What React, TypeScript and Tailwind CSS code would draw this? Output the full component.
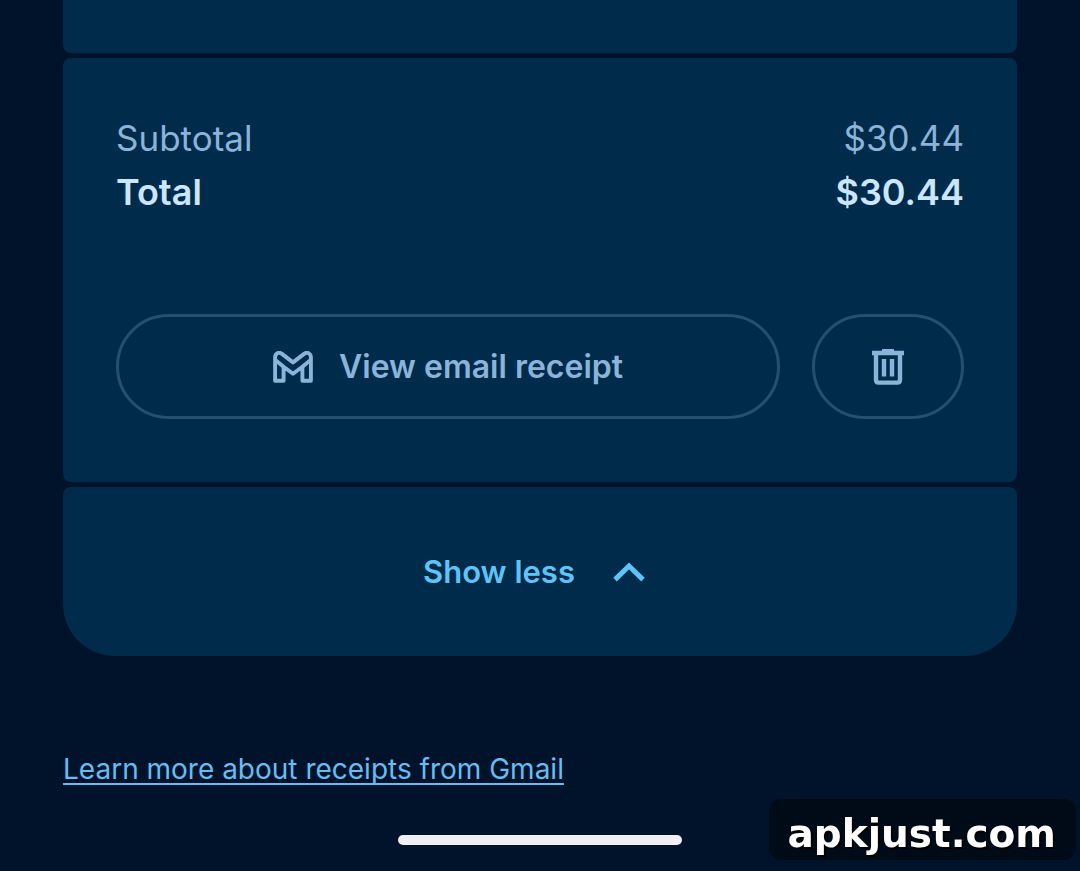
import type { ReactNode } from "react";

type AmountRow = {
  label: string;
  amount: string;
  strong?: boolean;
};

const AMOUNTS: AmountRow[] = [
  { label: "Subtotal", amount: "$30.44" },
  { label: "Total", amount: "$30.44", strong: true },
];

function GmailIcon() {
  return (
    <svg
      width="40"
      height="32"
      viewBox="0 0 40 32"
      fill="none"
      stroke="currentColor"
      strokeWidth="3.9"
      strokeLinejoin="round"
      aria-hidden="true"
    >
      <path d="M2.1 29.8V6.4C2.1 2.6 5.6 0.6 8.6 2.6L20 11.4L31.4 2.6C34.4 0.6 37.9 2.6 37.9 6.4V29.8H29.4V15.8L20 22.8L10.6 15.8V29.8Z" />
      <path d="M2.6 9.2L10.6 15.8M37.4 9.2L29.4 15.8" />
    </svg>
  );
}

function TrashIcon() {
  return (
    <svg
      width="32"
      height="36"
      viewBox="0 0 32 36"
      fill="none"
      stroke="currentColor"
      strokeWidth="4.4"
      aria-hidden="true"
    >
      <path d="M0 4H32M10 2H22" />
      <path d="M4 4V31Q4 33.6 6.6 33.6H25.4Q28 33.6 28 31V4" />
      <path d="M12 10V27.5M20 10V27.5" />
    </svg>
  );
}

function ChevronUpIcon() {
  return (
    <svg
      width="32"
      height="20"
      viewBox="0 0 32 20"
      fill="none"
      stroke="currentColor"
      strokeWidth="5"
      aria-hidden="true"
    >
      <path d="M2 17.6L16 4L30 17.6" />
    </svg>
  );
}

type OutlineButtonProps = {
  className: string;
  label?: string;
  children: ReactNode;
};

function OutlineButton({ className, label, children }: OutlineButtonProps) {
  return (
    <button
      type="button"
      aria-label={label}
      className={`flex h-[105px] items-center justify-center gap-[26px] rounded-full border-3 border-[#25506f] text-[32px] leading-10 font-semibold text-[#8ab4d8] ${className}`}
    >
      {children}
    </button>
  );
}

export default function App() {
  return (
    <div className="min-h-screen bg-[#00132b] font-['Inter',sans-serif]">
      <main className="px-[63px]">
        <div className="flex flex-col gap-[5px]">
          <div className="h-[53px] rounded-b-lg bg-[#002b4b]" />

          <section className="rounded-lg bg-[#002b4b] px-[53px] pt-[53px] pb-[63px]">
            <dl>
              {AMOUNTS.map((row) => (
                <div
                  key={row.label}
                  className={`flex h-[54px] items-center justify-between leading-10 ${
                    row.strong
                      ? "text-[36px] font-semibold text-[#cbe6ff]"
                      : "text-[35px] text-[#8ab4d8]"
                  }`}
                >
                  <dt>{row.label}</dt>
                  <dd>{row.amount}</dd>
                </div>
              ))}
            </dl>

            <div className="mt-[95px] flex gap-8">
              <OutlineButton className="flex-1">
                <GmailIcon />
                View email receipt
              </OutlineButton>
              <OutlineButton className="w-[152px]" label="Delete">
                <TrashIcon />
              </OutlineButton>
            </div>
          </section>

          <button
            type="button"
            className="flex h-[169px] items-center justify-center gap-[38px] rounded-t-lg rounded-b-[52px] bg-[#002b4b] pr-3 text-[31px] leading-10 font-semibold text-[#5fc3f8]"
          >
            Show less
            <ChevronUpIcon />
          </button>
        </div>

        <a
          href="#"
          className="mt-[93px] inline-block text-[28px] leading-10 text-[#67bdf2] underline decoration-2 underline-offset-4 [text-decoration-skip-ink:none]"
        >
          Learn more about receipts from Gmail
        </a>
      </main>

      <div className="mx-auto mt-[46px] h-[10px] w-[284px] rounded-full bg-[#efeff4]" />

      <div className="fixed right-1 bottom-[11px] flex h-[61px] items-center rounded-xl bg-[#000b18] pr-5 pl-[18px] pt-[8px] font-['DejaVu_Sans',sans-serif] text-[39px] leading-none font-bold text-white [text-shadow:2px_2px_0_#000]">
        apkjust.com
      </div>
    </div>
  );
}
